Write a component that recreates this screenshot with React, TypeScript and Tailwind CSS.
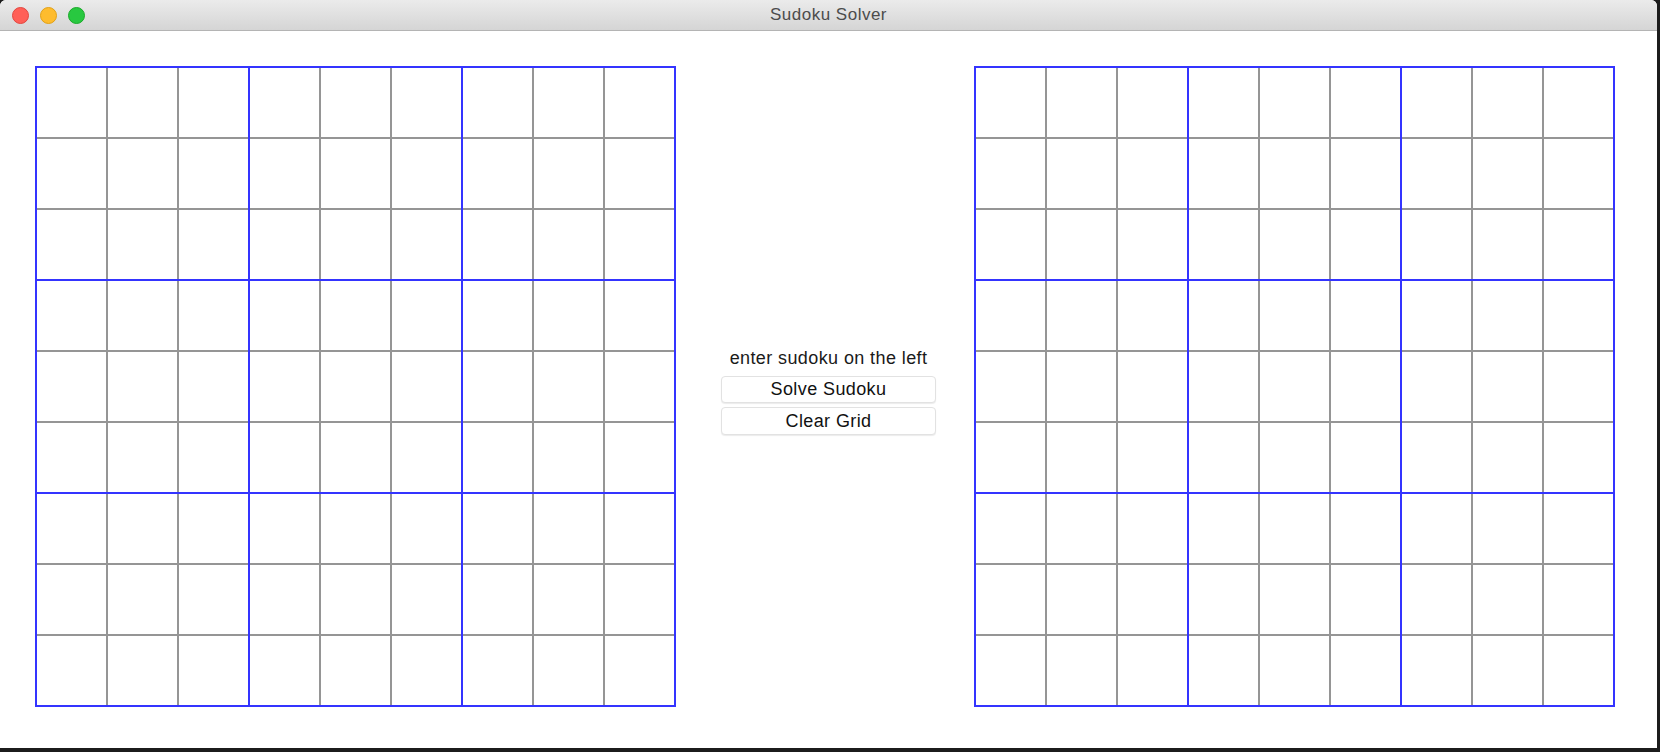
import React from "react";

function Block() {
  return (
    <div className="grid grid-cols-3 grid-rows-3 gap-[2px] bg-[#959595]">
      {Array.from({ length: 9 }).map((_, i) => (
        <div key={i} className="bg-white" />
      ))}
    </div>
  );
}

function Board() {
  return (
    <div className="grid h-[641px] w-[641px] shrink-0 grid-cols-3 grid-rows-3 gap-[2px] bg-[#3434ff] p-[2px]">
      {Array.from({ length: 9 }).map((_, i) => (
        <Block key={i} />
      ))}
    </div>
  );
}

export default function App() {
  return (
    <div
      className="relative h-[752px] w-[1660px] overflow-hidden bg-[#1c1c1c]"
      style={{ fontFamily: '"Helvetica Neue", "Liberation Sans", Arial, sans-serif' }}
    >
      <div className="flex h-[748px] w-[1657px] flex-col overflow-hidden rounded-t-[6px] bg-white">
        {/* title bar */}
        <div className="relative flex h-[31px] shrink-0 items-center justify-center border-b border-[#b4b4b4] bg-gradient-to-b from-[#ebebeb] to-[#d5d5d5]">
          <div className="absolute left-[12px] top-[7px] flex gap-[11px]">
            <div className="h-[17px] w-[17px] rounded-full border border-[#e2463f] bg-[#ff5f57]" />
            <div className="h-[17px] w-[17px] rounded-full border border-[#e1a116] bg-[#febc2e]" />
            <div className="h-[17px] w-[17px] rounded-full border border-[#1aab29] bg-[#28c840]" />
          </div>
          <span className="text-[17px] tracking-[0.5px] text-[#4c4c4c]">Sudoku Solver</span>
        </div>
        {/* content */}
        <div className="flex flex-1 items-start pl-[35px] pt-[35px]">
          <Board />
          <div className="flex w-[298px] flex-col items-center pl-[7px] pt-[280px]">
            <div className="h-[24px] text-[18px] leading-[24px] tracking-[0.4px] text-[#1a1a1a]">enter sudoku on the left</div>
            <button className="mt-[6px] h-[27px] w-[215px] rounded-[4px] border border-[#e2e2e2] bg-white text-[18px] leading-[25px] tracking-[0.4px] text-[#111] shadow-[0_1px_1px_rgba(0,0,0,0.08)]">
              Solve Sudoku
            </button>
            <button className="mt-[4px] h-[28px] w-[215px] rounded-[4px] border border-[#e2e2e2] bg-white text-[18px] leading-[26px] tracking-[0.4px] text-[#111] shadow-[0_1px_1px_rgba(0,0,0,0.08)]">
              Clear Grid
            </button>
          </div>
          <Board />
        </div>
      </div>
    </div>
  );
}
